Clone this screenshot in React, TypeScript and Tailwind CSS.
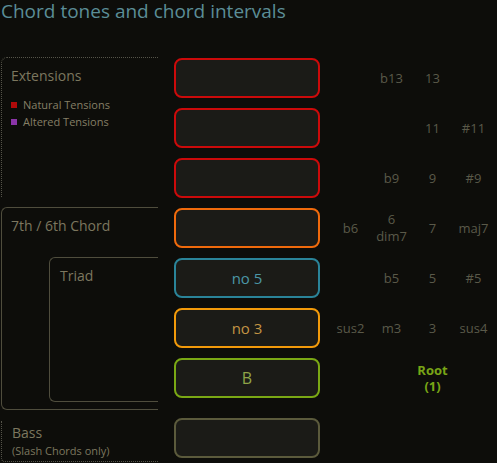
import React from "react"

type Row = {
    border: string
    label?: string
    labelColor?: string
    cells: string[][]
}

const rows: Row[] = [
    { border: "border-[#cc0a0a]", cells: [[], ["b13"], ["13"], []] },
    { border: "border-[#cc0a0a]", cells: [[], [], ["11"], ["#11"]] },
    { border: "border-[#cc0a0a]", cells: [[], ["b9"], ["9"], ["#9"]] },
    { border: "border-[#f06a0c]", cells: [["b6"], ["6", "dim7"], ["7"], ["maj7"]] },
    { border: "border-[#2a8499]", label: "no 5", labelColor: "text-[#4b97a6]", cells: [[], ["b5"], ["5"], ["#5"]] },
    { border: "border-[#f29a0a]", label: "no 3", labelColor: "text-[#c39444]", cells: [["sus2"], ["m3"], ["3"], ["sus4"]] },
    { border: "border-[#7aa814]", label: "B", labelColor: "text-[#8fa548]", cells: [] },
]

export default function App() {
    return (
        <div className="w-[497px] h-[463px] overflow-hidden bg-[#0d0d0a] font-['Open_Sans',sans-serif]">
            <h1 className="pl-[1px] text-[19px] leading-[22px] text-[#5b8d97]">
                Chord tones and chord intervals
            </h1>

            <div className="mt-[35px] flex">
                {/* left labels */}
                <div className="ml-[1px] w-[157px] flex flex-col">
                    <div className="h-[140px] border-t border-l border-dotted border-[#55544a] rounded-tl-[6px] pl-[9px] pt-[8px]">
                        <div className="text-[14px] leading-[20px] text-[#7c775f]">Extensions</div>
                        <div className="mt-[10px] text-[11px] leading-[17px] text-[#857f66]">
                            <div className="flex items-center gap-[6px]">
                                <span className="w-[6px] h-[6px] bg-[#b00a0a]" />
                                Natural Tensions
                            </div>
                            <div className="flex items-center gap-[6px]">
                                <span className="w-[6px] h-[6px] bg-[#8a34a8]" />
                                Altered Tensions
                            </div>
                        </div>
                    </div>

                    <div className="mt-[10px] h-[203px] border border-r-0 border-[#4f4d3d] rounded-l-[6px] pt-[8px]">
                        <div className="pl-[9px] text-[14px] leading-[20px] text-[#7c775f]">7th / 6th Chord</div>
                        <div className="mt-[21px] ml-[47px] h-[145px] border border-r-0 border-[#4f4d3d] rounded-l-[6px] pt-[8px] pl-[10px]">
                            <div className="text-[14px] leading-[20px] text-[#7c775f]">Triad</div>
                        </div>
                    </div>

                    <div className="mt-[11px] h-[41px] border-l border-b border-dotted border-[#55544a] rounded-bl-[4px] pl-[10px] pt-[2px]">
                        <div className="text-[14px] leading-[20px] text-[#7c775f]">Bass</div>
                        <div className="mt-[1px] text-[11px] leading-[14px] text-[#7c775f]">(Slash Chords only)</div>
                    </div>
                </div>

                {/* buttons */}
                <div className="ml-[16px] pt-[1px] flex flex-col gap-[10px]">
                    {rows.map((r, i) => (
                        <div
                            key={i}
                            className={`w-[146px] h-[40px] border-2 ${r.border} rounded-[8px] bg-[#1b1b17] flex items-center justify-center ${r.label === "B" ? "text-[16px]" : "text-[15px]"} ${r.labelColor ?? ""}`}
                        >
                            {r.label}
                        </div>
                    ))}
                    <div className="mt-[10px] w-[146px] h-[40px] border-2 border-[#5b5a3c] rounded-[8px] bg-[#1b1b17]" />
                </div>

                {/* intervals */}
                <div className="ml-[10px] pt-[1px] w-[164px] flex flex-col gap-[10px]">
                    {rows.map((r, i) =>
                        i === 6 ? (
                            <div key={i} className="h-[40px] grid grid-cols-4 items-center text-center">
                                <div />
                                <div />
                                <div className="text-[13px] leading-[16px] font-bold text-[#78a516]">
                                    <div>Root</div>
                                    <div>(1)</div>
                                </div>
                                <div />
                            </div>
                        ) : (
                            <div key={i} className="h-[40px] grid grid-cols-4 items-center text-center text-[13px] leading-[17px] text-[#5a5949]">
                                {r.cells.map((c, j) => (
                                    <div key={j}>
                                        {c.map((t) => (
                                            <div key={t}>{t}</div>
                                        ))}
                                    </div>
                                ))}
                            </div>
                        )
                    )}
                </div>
            </div>
        </div>
    )
}
